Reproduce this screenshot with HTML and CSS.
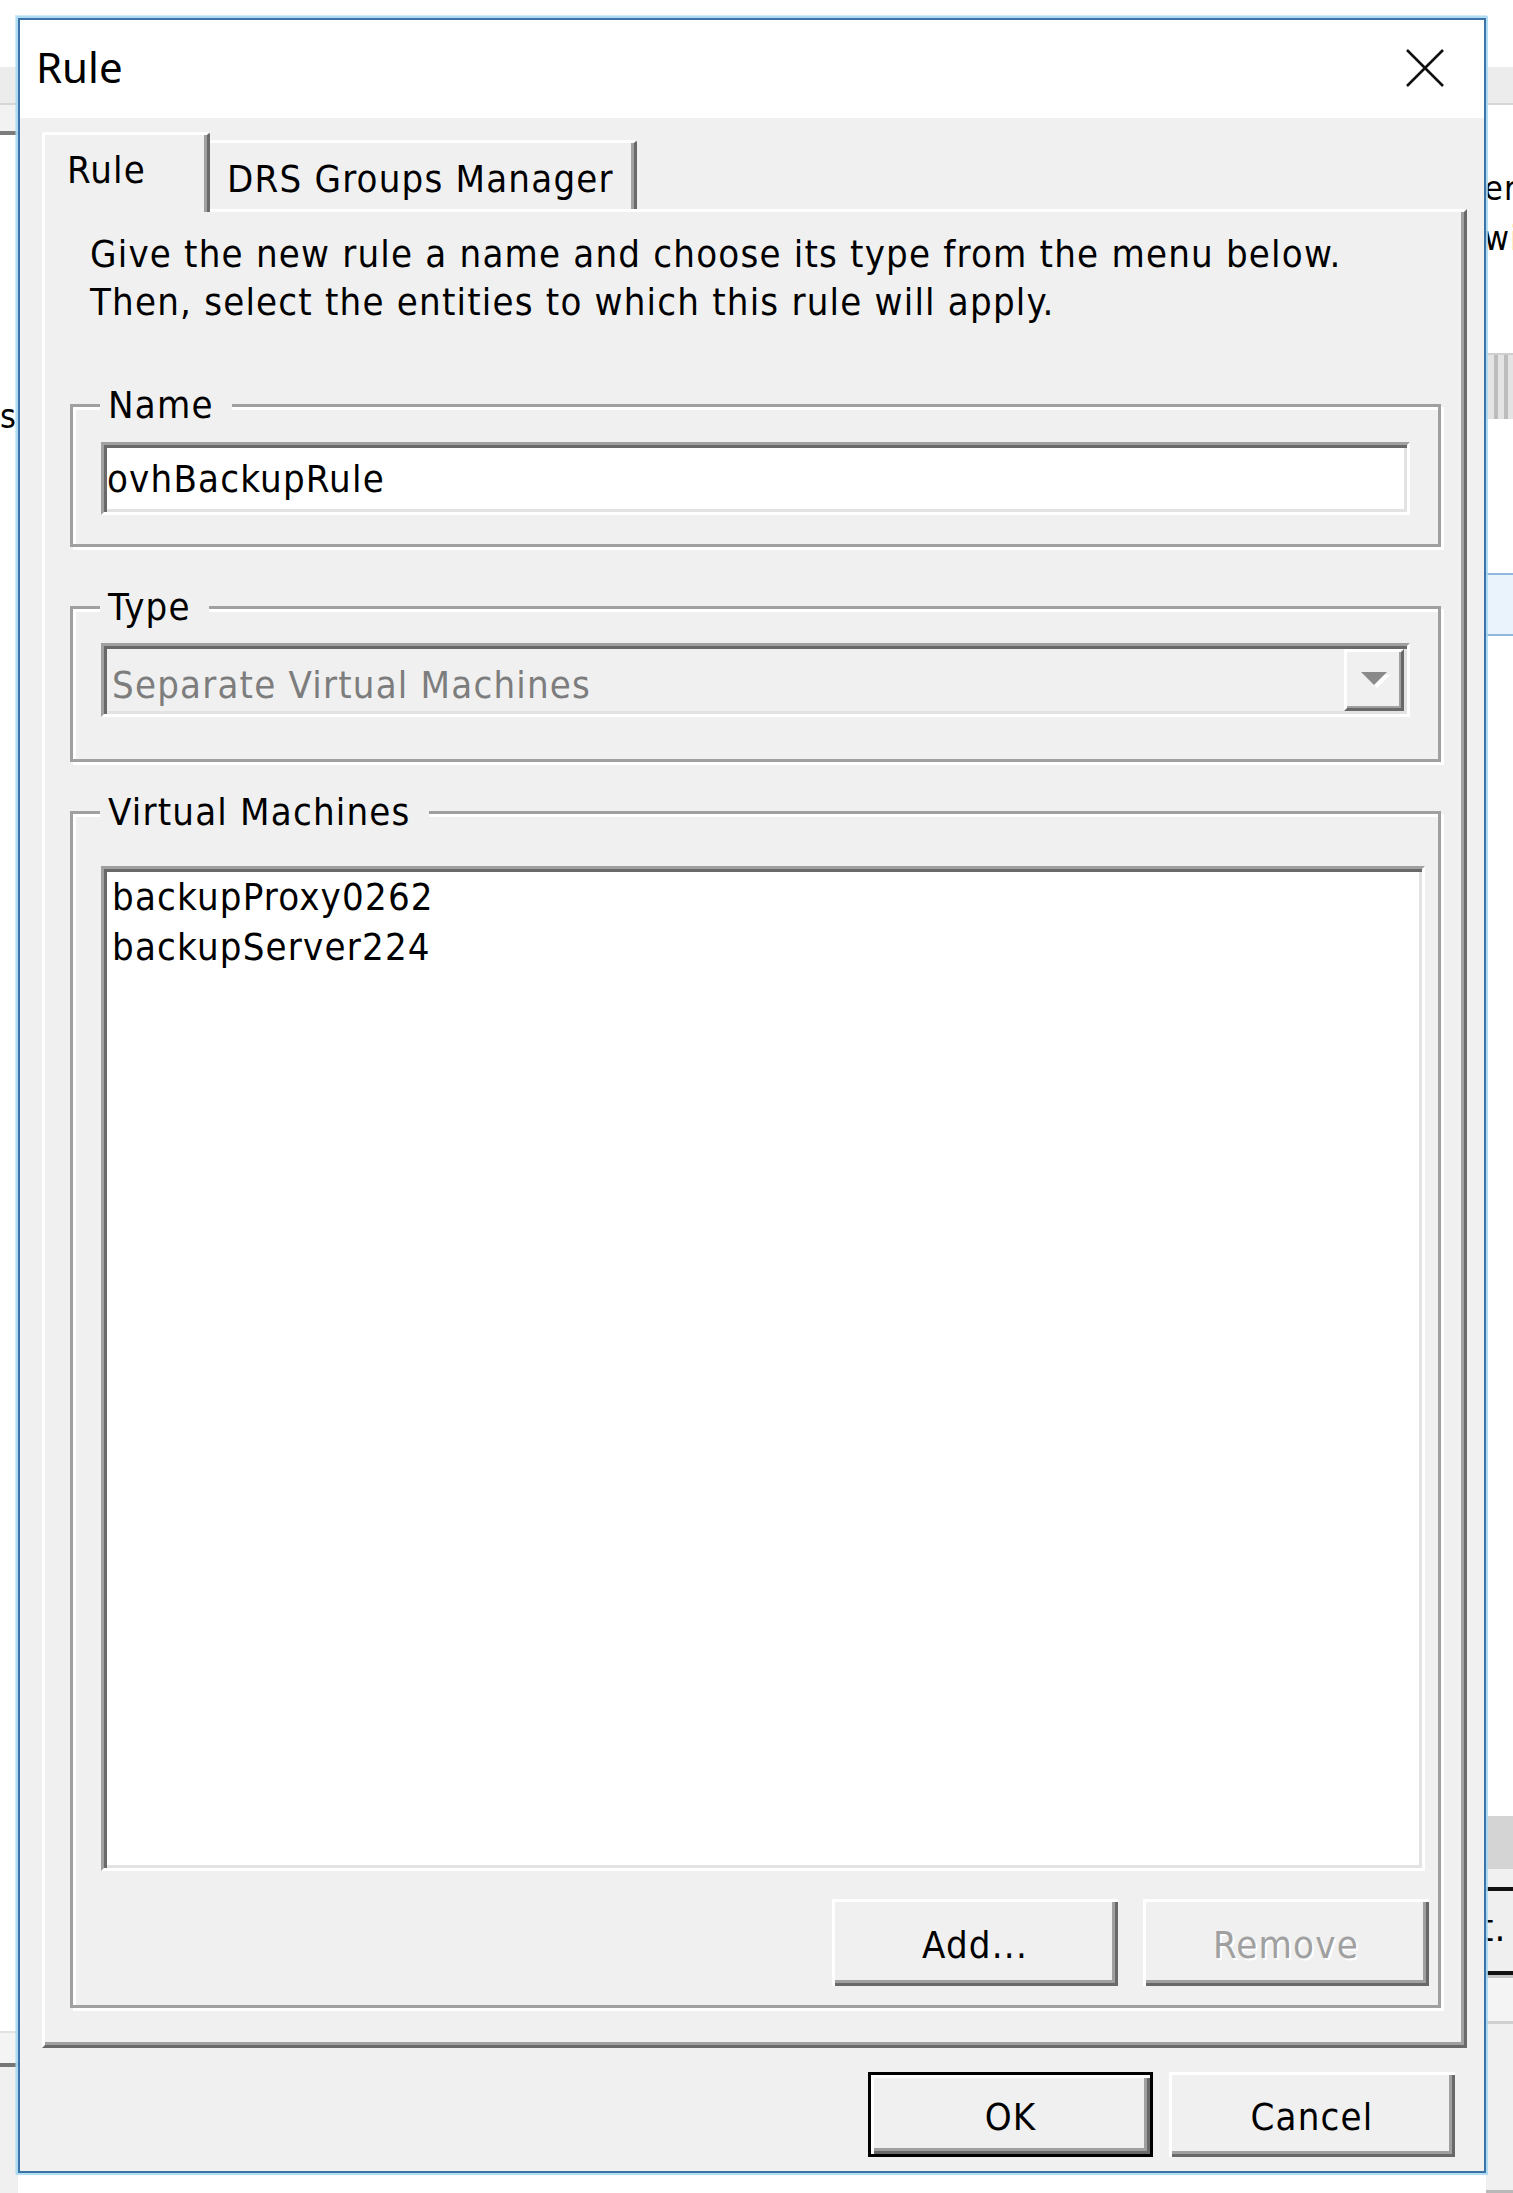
FILE: index.html
```html
<!DOCTYPE html>
<html lang="en">
<head>
<meta charset="utf-8">
<title>Rule</title>
<link rel="stylesheet" href="styles.css">
</head>
<body>
<div class="backdrop">
  <div class="side side-left">
    <div class="bk-top"></div>
    <div class="bk-band"></div>
    <div class="bk-sub"></div>
    <div class="bk-body">
      <div class="bk-text-left">s</div>
    </div>
    <div class="bk-foot-line"></div>
    <div class="bk-foot"></div>
  </div>
  <div class="side-mid"></div>
  <div class="side side-right">
    <div class="bk-top"></div>
    <div class="bk-band"></div>
    <div class="bk-info">
      <div class="bk-text-right">er</div>
      <div class="bk-text-right">wi</div>
    </div>
    <div class="bk-header"><span class="bk-col"></span><span class="bk-col"></span></div>
    <div class="bk-gap"></div>
    <div class="bk-selrow"></div>
    <div class="bk-list"></div>
    <div class="bk-scroll"></div>
    <div class="bk-btnzone">
      <div class="bk-btn">t.</div>
    </div>
    <div class="bk-line1"></div>
    <div class="bk-line2"></div>
    <div class="bk-rest"></div>
  </div>
</div>

<div class="dialog">
  <div class="titlebar">
    <span class="title">Rule</span>
    <svg class="close" width="38" height="38" viewBox="0 0 38 38" aria-hidden="true">
      <path d="M1 1 L37 37 M37 1 L1 37" stroke="#111" stroke-width="2.6" fill="none"/>
    </svg>
  </div>
  <div class="client">
    <div class="tabs">
      <div class="tab tab-active">Rule</div>
      <div class="tab tab-drs">DRS Groups Manager</div>
    </div>
    <div class="panel">
      <p class="desc">Give the new rule a name and choose its type from the menu below.<br>Then, select the entities to which this rule will apply.</p>

      <fieldset class="group group-name">
        <legend>Name</legend>
        <div class="textbox">ovhBackupRule</div>
      </fieldset>

      <fieldset class="group group-type">
        <legend>Type</legend>
        <div class="combo">
          <span class="combo-text">Separate Virtual Machines</span>
          <span class="combo-btn">
            <svg width="30" height="18" viewBox="0 0 30 18" aria-hidden="true">
              <path d="M4 4 L30 4 L17 17 Z" fill="#fff"/>
              <path d="M1 1 L27 1 L14 14 Z" fill="#8a8a8a"/>
            </svg>
          </span>
        </div>
      </fieldset>

      <fieldset class="group group-vm">
        <legend>Virtual Machines</legend>
        <div class="listbox">
          <div class="item">backupProxy0262</div>
          <div class="item">backupServer224</div>
        </div>
        <div class="row-buttons">
          <div class="btn">Add...</div>
          <div class="btn btn-disabled">Remove</div>
        </div>
      </fieldset>
    </div>
    <div class="footer">
      <div class="btn btn-default">OK</div>
      <div class="btn">Cancel</div>
    </div>
  </div>
</div>
</body>
</html>
```

FILE: styles.css
```css
html, body {
  margin: 0;
  padding: 0;
}
body {
  width: 1513px;
  height: 2193px;
  overflow: hidden;
  background: #ffffff;
  position: relative;
  font-family: "DejaVu Sans Condensed", "DejaVu Sans", sans-serif;
  font-stretch: condensed;
  font-size: 38px;
  line-height: 48px;
  letter-spacing: 1.2px;
  color: #000;
}

/* ---------- underlying window ---------- */
.backdrop {
  display: grid;
  grid-template-columns: 18px 1fr 27px;
  height: 2193px;
}
.side {
  display: flex;
  flex-direction: column;
  overflow: hidden;
}
.bk-top { height: 67px; background: #fff; }
.bk-band { height: 36px; background: #ececec; border-bottom: 2px solid #d6d6d6; }
.bk-sub { height: 26px; background: #f2f2f2; border-bottom: 4px solid #7c7c7c; }
.bk-body { flex: 1; background: #fff; }
.bk-text-left {
  margin-top: 266px;
  text-align: right;
  margin-right: 2px;
  line-height: 30px;
  font-size: 34px;
}
.bk-foot-line { height: 30px; border-top: 2px solid #e2e2e2; border-bottom: 4px solid #767676; background: #f4f4f4; }
.bk-foot { height: 126px; background: #f0f0f0; }

.bk-info { height: 248px; background: #fff; padding-top: 58px; box-sizing: border-box; }
.bk-text-right {
  line-height: 50px;
  font-size: 34px;
  margin-left: -2px;
  white-space: nowrap;
}
.bk-header {
  height: 64px;
  background: #e4e4e4;
  border-top: 2px solid #cfcfcf;
  display: flex;
  gap: 6px;
  padding-left: 8px;
}
.bk-col { width: 4px; background: #bdbdbd; }
.bk-gap { height: 154px; background: #fff; }
.bk-selrow { height: 59px; background: #eaf3fc; border-top: 2px solid #8fb8dc; border-bottom: 2px solid #8fb8dc; }
.bk-list { height: 1180px; background: #fff; }
.bk-scroll { height: 53px; background: #d4d4d4; }
.bk-btnzone { height: 106px; background: #f0f0f0; padding-top: 18px; box-sizing: border-box; }
.bk-btn {
  height: 88px;
  box-sizing: border-box;
  border-top: 4px solid #111;
  border-bottom: 4px solid #111;
  background: #efefef;
  line-height: 74px;
  font-size: 38px;
  margin-left: -6px;
}
.bk-line1 { height: 46px; border-top: 3px solid #c4c4c4; background: #f4f4f4; box-sizing: border-box; }
.bk-line2 { height: 76px; border-top: 3px solid #d0d0d0; background: #f0f0f0; box-sizing: border-box; }
.bk-rest { flex: 1; background: #f0f0f0; border-bottom: 3px solid #b8b8b8; }

/* ---------- dialog ---------- */
.dialog {
  position: absolute;
  left: 18px;
  top: 18px;
  width: 1468px;
  height: 2155px;
  box-sizing: border-box;
  border: 2px solid #3d74a7;
  box-shadow: 0 0 0 2px rgba(168, 216, 242, 0.85), -1px -1px 0 2px rgba(168, 216, 242, 0.5);
  background: #f0f0f0;
  display: flex;
  flex-direction: column;
}
.titlebar {
  height: 98px;
  flex: none;
  background: #fff;
  display: flex;
  justify-content: space-between;
  align-items: flex-start;
  padding: 18px 40px 0 16px;
  box-sizing: border-box;
}
.title {
  font-family: "Noto Sans", "Open Sans", sans-serif;
  font-stretch: normal;
  font-size: 42px;
  line-height: 57px;
  letter-spacing: 0;
  color: #000;
}
.close { margin-top: 11px; }

.client {
  flex: 1;
  display: flex;
  flex-direction: column;
  padding: 14px 17px 0 22px;
}

/* tabs */
.tabs {
  display: flex;
  align-items: flex-end;
  height: 77px;
  flex: none;
}
.tab {
  box-sizing: border-box;
  height: 69px;
  border-top: 3px solid #fff;
  border-left: 3px solid #fff;
  border-right: 3px solid #696969;
  box-shadow: inset -3px 0 0 #a0a0a0;
  border-top-left-radius: 3px;
  border-top-right-radius: 3px;
  white-space: nowrap;
  background: #f0f0f0;
}
.tab-active {
  width: 168px;
  height: 80px;
  margin-bottom: -3px;
  padding: 11px 0 0 22px;
  position: relative;
  z-index: 1;
}
.tab-drs {
  width: 427px;
  border-left: none;
  padding: 12px 0 0 17px;
}

/* panel */
.panel {
  box-sizing: border-box;
  height: 1839px;
  flex: none;
  border-top: 3px solid #fff;
  border-left: 3px solid #fff;
  border-right: 3px solid #696969;
  border-bottom: 3px solid #696969;
  box-shadow: inset -3px -3px 0 #a0a0a0;
  padding: 18px 23px 0 25px;
  display: flex;
  flex-direction: column;
}
.desc {
  margin: 0 0 0 20px;
  white-space: nowrap;
}

.group {
  margin: 0;
  border: 3px solid #a0a0a0;
  box-shadow: inset 3px 3px 0 #fff, 3px 3px 0 #fff;
  padding: 13px 9px 29px 28px;
  min-inline-size: 0;
}
.group legend {
  padding: 0 18px 0 8px;
  margin-left: -1px;
  background: #f0f0f0;
  line-height: 48px;
}
.group-name { margin-top: 55px; }
.group-type { margin-top: 36px; padding-top: 12px; padding-bottom: 42px; }
.group-vm { margin-top: 26px; padding-top: 30px; padding-bottom: 19px; }

.textbox, .combo, .listbox {
  box-sizing: border-box;
  border: 3px solid;
  border-color: #a0a0a0 #fff #fff #a0a0a0;
  box-shadow: inset 3px 3px 0 #696969, inset -3px -3px 0 #e3e3e3;
}
.textbox {
  width: 1309px;
  height: 73px;
  background: #fff;
  padding: 10px 0 0 3px;
}
.combo {
  width: 1309px;
  height: 74px;
  background: #f0f0f0;
  display: flex;
  justify-content: space-between;
  padding: 3px 3px 3px 8px;
}
.combo-text {
  color: #7d7d7d;
  padding-top: 12px;
}
.combo-btn {
  width: 60px;
  box-sizing: border-box;
  border-top: 3px solid #fff;
  border-left: 3px solid #fff;
  border-right: 3px solid #696969;
  border-bottom: 3px solid #696969;
  box-shadow: inset -2px -2px 0 #a0a0a0;
  display: flex;
  align-items: center;
  justify-content: center;
  padding-left: 2px;
}
.listbox {
  width: 1324px;
  height: 1005px;
  background: #fff;
  padding: 3px 0 0 8px;
}
.item { line-height: 50px; }

.row-buttons {
  display: flex;
  justify-content: flex-end;
  gap: 25px;
  margin-top: 28px;
}
.btn {
  box-sizing: border-box;
  width: 286px;
  height: 87px;
  display: flex;
  align-items: center;
  justify-content: center;
  background: #f0f0f0;
  box-shadow: inset 3px 3px 0 #fff, inset -3px -3px 0 #696969, inset -6px -6px 0 #a0a0a0;
  padding-top: 4px;
}
.btn-disabled {
  color: #a0a0a0;
  text-shadow: 2px 2px 0 #fff;
}
.footer {
  display: flex;
  justify-content: flex-end;
  gap: 16px;
  margin-top: 24px;
  padding-right: 12px;
}
.footer .btn { height: 85px; }
.btn-default {
  width: 285px;
  border: 3px solid #000;
}
```
